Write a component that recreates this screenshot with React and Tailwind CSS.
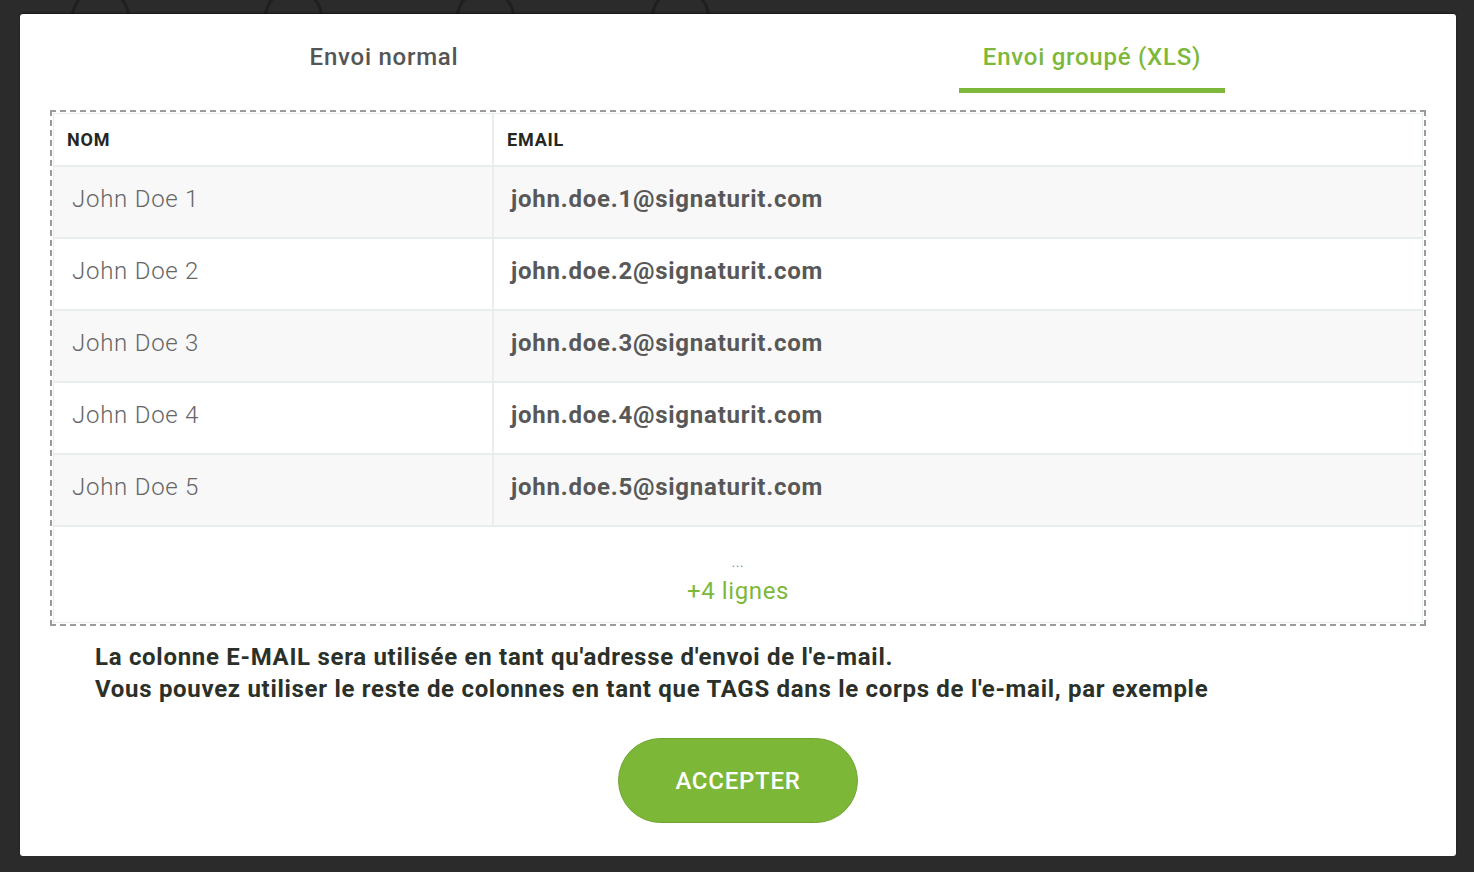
import React from "react";

const ROWS = [1, 2, 3, 4, 5];

const BG_CIRCLES = ["left-[71px]", "left-[264px]", "left-[456px]", "left-[651px]"];

export default function App() {
  return (
    <div className="relative w-full h-[872px] bg-[#2b2b2b] overflow-hidden font-['Roboto',sans-serif] pt-[14px] pl-[20px]">
      {/* stepper behind the overlay */}
      {BG_CIRCLES.map((pos) => (
        <div
          key={pos}
          className={`absolute top-[-12px] ${pos} w-[59px] h-[59px] rounded-full border-[3px] border-[#1f1f1f]`}
        />
      ))}

      {/* Modal */}
      <div className="relative w-[1436px] h-[842px] bg-white rounded-[3px] shadow-[0_-1px_2px_rgba(0,0,0,0.5)] flex flex-col pt-[29px] pb-[33px] tracking-[0.75px]">
        {/* Tabs */}
        <div className="flex px-[10px]">
          <div className="flex-1 flex justify-center">
            <button className="px-6 pb-[17px] border-b-[5px] border-transparent text-[24px] leading-[28px] font-medium text-[#555] tracking-[0.75px]">
              Envoi normal
            </button>
          </div>
          <div className="flex-1 flex justify-center">
            <button className="px-6 pb-[17px] border-b-[5px] border-[#7db83a] text-[24px] leading-[28px] font-medium text-[#7db83a] tracking-[0.75px]">
              Envoi groupé (XLS)
            </button>
          </div>
        </div>

        {/* Preview table */}
        <div className="mx-[30px] mt-[17px] border-2 border-dashed border-[#9b9b9b] p-px">
          <div className="border border-[#e8efea]">
            <div className="flex h-[51px] items-center text-[18px] font-bold text-[#232823] tracking-[0.8px]">
              <div className="w-[440px] h-full flex items-center px-[13px] border-r-2 border-[#e8efea]">NOM</div>
              <div className="flex-1 px-[13px]">EMAIL</div>
            </div>
            {ROWS.map((n) => (
              <div
                key={n}
                className={`flex h-[72px] border-t-2 border-[#e8efea] text-[24px] leading-[28px] ${n % 2 === 1 ? "bg-[#f8f8f8]" : "bg-white"}`}
              >
                <div className="w-[440px] flex items-center pb-[6px] px-[18px] border-r-2 border-[#e8efea] font-light text-[#666]">
                  John Doe {n}
                </div>
                <div className="flex-1 flex items-center pb-[6px] px-[17px] font-bold text-[#585858]">
                  john.doe.{n}@signaturit.com
                </div>
              </div>
            ))}
            <div className="h-[97px] border-t-2 border-[#e8efea] flex flex-col items-center justify-center pt-[12px]">
              <span className="text-[13px] leading-[14px] text-[#888]">...</span>
              <span className="mt-[6px] text-[24px] leading-[30px] text-[#7db83a] tracking-[0.6px]">+4 lignes</span>
            </div>
          </div>
        </div>

        {/* Notes */}
        <div className="mt-[15px] px-[75px] text-[24px] leading-[32px] font-bold text-[#2b3129] tracking-[0.7px]">
          <p>La colonne E-MAIL sera utilisée en tant qu'adresse d'envoi de l'e-mail.</p>
          <p>Vous pouvez utiliser le reste de colonnes en tant que TAGS dans le corps de l'e-mail, par exemple</p>
        </div>

        <div className="mt-auto flex justify-center">
          <button className="w-[240px] h-[85px] rounded-full bg-[#7cb737] border border-[#6fa431] text-white text-[24px] font-medium tracking-[0.75px]">
            ACCEPTER
          </button>
        </div>
      </div>
    </div>
  );
}
